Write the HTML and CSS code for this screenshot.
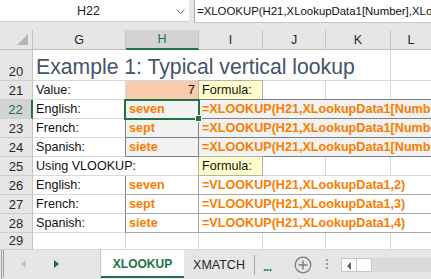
FILE: index.html
```html
<!DOCTYPE html>
<html lang="en">

<head>
    <meta charset="UTF-8">
    <meta name="viewport" content="width=device-width, initial-scale=1.0">
    <title>XLOOKUP</title>
    <link rel="stylesheet" href="styles.css">
</head>

<body>
    <div class="app">
        <div class="topbar">
            <div class="namebox">
                <span class="ref">H22</span>
                <svg class="chev" width="9" height="6" viewBox="0 0 9 6"><path d="M0.5 0.5 L4.5 4.5 L8.5 0.5" fill="none" stroke="#666" stroke-width="1"/></svg>
            </div>
            <div class="formula">=XLOOKUP(H21,XLookupData1[Number],XLookupData1[English])</div>
        </div>

        <div class="sheet">
            <!-- column headers -->
            <div class="hd corner"><span class="tri"></span></div>
            <div class="hd">G</div>
            <div class="hd sel">H</div>
            <div class="hd">I</div>
            <div class="hd">J</div>
            <div class="hd">K</div>
            <div class="hd last">L</div>

            <!-- 20 -->
            <div class="rh">20</div>
            <div class="c title span5">Example 1: Typical vertical lookup</div>
            <div class="c last"></div>

            <!-- 21 -->
            <div class="rh">21</div>
            <div class="c">Value:</div>
            <div class="c peach num">7</div>
            <div class="c note">Formula:</div>
            <div class="c"></div>
            <div class="c"></div>
            <div class="c last"></div>

            <!-- 22 -->
            <div class="rh active">22</div>
            <div class="c lab">English:</div>
            <div class="c calc active-cell">seven</div>
            <div class="c calc span4 first">=XLOOKUP(H21,XLookupData1[Number],XLookupData1[English])</div>

            <!-- 23 -->
            <div class="rh">23</div>
            <div class="c lab">French:</div>
            <div class="c calc">sept</div>
            <div class="c calc span4">=XLOOKUP(H21,XLookupData1[Number],XLookupData1[French])</div>

            <!-- 24 -->
            <div class="rh">24</div>
            <div class="c lab">Spanish:</div>
            <div class="c calc">siete</div>
            <div class="c calc span4">=XLOOKUP(H21,XLookupData1[Number],XLookupData1[Spanish])</div>

            <!-- 25 -->
            <div class="rh">25</div>
            <div class="c span2">Using VLOOKUP:</div>
            <div class="c note">Formula:</div>
            <div class="c"></div>
            <div class="c"></div>
            <div class="c last"></div>

            <!-- 26 -->
            <div class="rh">26</div>
            <div class="c lab">English:</div>
            <div class="c out">seven</div>
            <div class="c out span4">=VLOOKUP(H21,XLookupData1,2)</div>

            <!-- 27 -->
            <div class="rh">27</div>
            <div class="c lab">French:</div>
            <div class="c out">sept</div>
            <div class="c out span4">=VLOOKUP(H21,XLookupData1,3)</div>

            <!-- 28 -->
            <div class="rh">28</div>
            <div class="c lab">Spanish:</div>
            <div class="c out">siete</div>
            <div class="c out span4">=VLOOKUP(H21,XLookupData1,4)</div>

            <!-- 29 -->
            <div class="rh">29</div>
            <div class="c"></div>
            <div class="c"></div>
            <div class="c"></div>
            <div class="c"></div>
            <div class="c"></div>
            <div class="c last"></div>
        </div>

        <div class="tabs">
            <div class="nav">
                <span class="arrow left"></span>
                <span class="arrow right"></span>
            </div>
            <div class="tab active">XLOOKUP</div>
            <div class="tab">XMATCH</div>
            <div class="more">...</div>
            <svg class="add" width="18" height="18" viewBox="0 0 18 18">
                <circle cx="9" cy="9" r="7.8" fill="none" stroke="#7a7a7a" stroke-width="1.2"/>
                <path d="M9 4.5 V13.5 M4.5 9 H13.5" stroke="#7a7a7a" stroke-width="1.4"/>
            </svg>
            <div class="dots"><i></i><i></i><i></i></div>
            <div class="hscroll">
                <div class="sbtn"><span class="sarrow"></span></div>
                <div class="thumb"></div>
                <div class="track"></div>
            </div>
        </div>
    </div>
</body>

</html>
```

FILE: styles.css
```css
html,
body {
    margin: 0;
    width: 431px;
    height: 279px;
    overflow: hidden;
    font-family: "Liberation Sans", Arial, sans-serif;
    background: #fff;
}

.app {
    width: 431px;
    height: 279px;
    display: flex;
    flex-direction: column;
    overflow: hidden;
}

/* name box + formula bar */
.topbar {
    height: 30px;
    display: flex;
    align-items: flex-start;
    background: #e6e6e6;
    flex-shrink: 0;
}

.namebox {
    width: 189px;
    height: 22px;
    box-sizing: border-box;
    background: #fff;
    border-bottom: 1px solid #d0d0d0;
    display: flex;
    align-items: center;
    position: relative;
}

.ref {
    font-size: 12.5px;
    color: #222;
    margin-left: 77px;
}

.chev {
    position: absolute;
    left: 176px;
    top: 9px;
}

.formula {
    margin-left: 5px;
    flex: 1;
    height: 23px;
    box-sizing: border-box;
    background: #fff;
    border-left: 1px solid #ababab;
    border-bottom: 1px solid #c8c8c8;
    padding-left: 2px;
    font-size: 11.4px;
    line-height: 22px;
    color: #111;
    white-space: nowrap;
    overflow: hidden;
}

/* grid */
.sheet {
    display: grid;
    grid-template-columns: 33px 93px 73px 64px 63px 65px 40px;
    grid-template-rows: 20px 31px repeat(8, 19px) 17px;
    height: 220px;
    overflow: hidden;
    flex-shrink: 0;
    font-size: 12.6px;
    color: #111;
}

.hd {
    background: #e6e6e6;
    border-right: 1px solid #c4c4c4;
    border-bottom: 1px solid #bdbdbd;
    box-sizing: border-box;
    display: flex;
    align-items: center;
    justify-content: center;
    font-size: 12.5px;
    color: #262626;
}

.hd.sel {
    background: #d3d3d3;
    color: #217346;
    border-bottom: 2px solid #217346;
}

.corner {
    position: relative;
}

.tri {
    position: absolute;
    right: 4px;
    bottom: 4px;
    width: 0;
    height: 0;
    border-left: 11px solid transparent;
    border-bottom: 11px solid #b5b5b5;
}

.rh {
    background: #e6e6e6;
    border-right: 1px solid #c4c4c4;
    border-bottom: 1px solid #cfcfcf;
    box-sizing: border-box;
    display: flex;
    align-items: flex-end;
    justify-content: center;
    padding-bottom: 1px;
    font-size: 13px;
    color: #262626;
}

.rh.active {
    background: #d3d3d3;
    color: #217346;
    border-right: 2px solid #217346;
}

.c {
    border-right: 1px solid #d9d9d9;
    border-bottom: 1px solid #d9d9d9;
    box-sizing: border-box;
    padding: 0 3px 1px;
    white-space: nowrap;
    overflow: hidden;
    display: flex;
    align-items: flex-end;
    line-height: 16px;
}

.last {
    border-right: none;
}

.span5 {
    grid-column: span 5;
}

.span4 {
    grid-column: span 4;
    border-right: none;
}

.span2 {
    grid-column: span 2;
}

.title {
    font-size: 21.2px;
    color: #44546a;
    line-height: 26px;
    padding-bottom: 0;
}

.peach {
    background: #f8cbad;
}

.num {
    justify-content: flex-end;
}

.note {
    background: #ffffcc;
    border: 1px solid #b2b2b2;
    margin: -1px 0 0 -1px;
}

.lab {
    border-right-color: #7f7f7f;
}

.calc {
    background: #f2f2f2;
    border-bottom-color: #7f7f7f;
    border-right-color: #7f7f7f;
    color: #fa7d00;
    font-weight: bold;
}

.calc.first {
    border-top: 1px solid #7f7f7f;
    margin-top: -1px;
}

.out {
    border-bottom-color: #a6a6a6;
    border-right-color: #a6a6a6;
    color: #fa7d00;
    font-weight: bold;
}

.active-cell {
    position: relative;
    overflow: visible;
}

.active-cell::after {
    content: "";
    position: absolute;
    left: -2px;
    top: -1px;
    right: -2px;
    bottom: -2px;
    border: 2px solid #217346;
}

.active-cell::before {
    content: "";
    position: absolute;
    right: -4px;
    bottom: -4px;
    width: 5px;
    height: 5px;
    background: #217346;
    border: 1px solid #fff;
    z-index: 2;
}

/* sheet tabs */
.tabs {
    height: 29px;
    display: flex;
    align-items: stretch;
    background: #e6e6e6;
    flex-shrink: 0;
}

.nav {
    width: 96px;
    margin-left: 1px;
    border-left: 3px double #9a9a9a;
    border-right: 1px solid #c6c6c6;
    border-bottom: 2px solid #e6e6e6;
    position: relative;
}

.arrow {
    position: absolute;
    top: 10px;
    width: 0;
    height: 0;
    border-top: 4.5px solid transparent;
    border-bottom: 4.5px solid transparent;
}

.arrow.left {
    left: 17px;
    border-right: 5px solid #c3c3c3;
}

.arrow.right {
    left: 50px;
    border-left: 5px solid #1e6b41;
}

.tab {
    display: flex;
    align-items: center;
    justify-content: center;
    font-size: 12.5px;
    color: #262626;
    padding-top: 1px;
}

.tab.active {
    width: 83px;
    background: #fff;
    color: #217346;
    font-weight: bold;
    font-size: 12px;
    border-bottom: 2px solid #217346;
    margin-bottom: 1px;
    box-sizing: border-box;
}

.tab:not(.active) {
    width: 70px;
    border-right: 1px solid #a8a8a8;
    margin: 5px 0 4px;
    padding-top: 0;
}

.more {
    color: #217346;
    font-weight: bold;
    font-size: 12px;
    margin-left: 8px;
    padding-top: 10px;
    letter-spacing: -0.5px;
}

.add {
    margin: 6px 0 0 22px;
}

.dots {
    margin: 9px 0 0 14px;
    display: flex;
    flex-direction: column;
    gap: 2px;
}

.dots i {
    display: block;
    width: 2px;
    height: 2px;
    background: #9a9a9a;
}

.hscroll {
    margin: 8px 0 0 13px;
    height: 14px;
    flex: 1;
    display: flex;
}

.sbtn {
    width: 15px;
    background: #fff;
    border: 1px solid #c6c6c6;
    border-right: none;
    box-sizing: border-box;
    position: relative;
}

.sarrow {
    position: absolute;
    left: 5px;
    top: 2.5px;
    width: 0;
    height: 0;
    border-top: 4px solid transparent;
    border-bottom: 4px solid transparent;
    border-right: 4px solid #606060;
}

.thumb {
    width: 16px;
    background: #fff;
    border: 1px solid #c6c6c6;
    box-sizing: border-box;
}

.track {
    flex: 1;
    background: #dadada;
}
```
